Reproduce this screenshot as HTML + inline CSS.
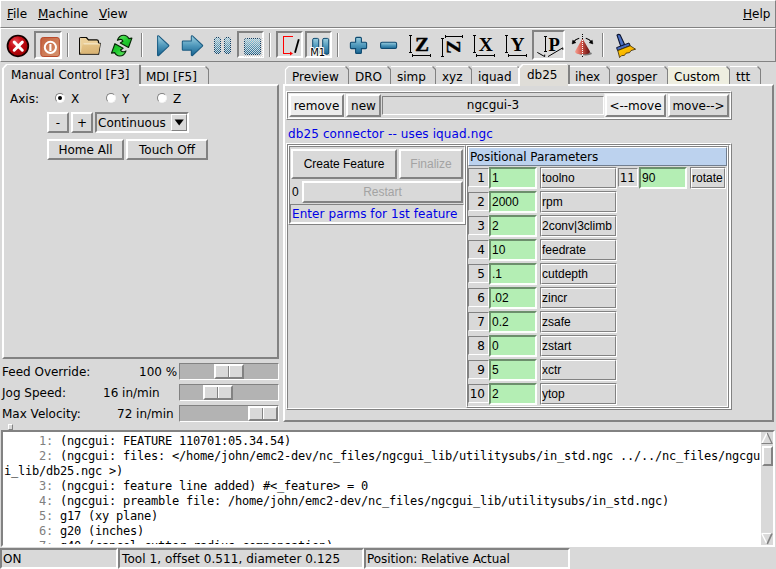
<!DOCTYPE html>
<html><head><meta charset="utf-8"><title>AXIS</title>
<style>
*{box-sizing:border-box;margin:0;padding:0}
html{background:#d9d9d9}
html,body{width:776px;height:569px;overflow:hidden}
body{position:relative;font:12px "DejaVu Sans","Liberation Sans",sans-serif;color:#000}
.a{position:absolute;white-space:nowrap}
.t{position:absolute;white-space:nowrap;line-height:15px;height:15px}
.h{font-family:"Liberation Sans",sans-serif}
.r2{border:2px solid;border-color:#fff #828282 #828282 #fff;background:#d9d9d9}
.s2{border:2px solid;border-color:#828282 #fff #fff #828282;background:#d9d9d9}
.r1{border:1px solid;border-color:#fff #828282 #828282 #fff;background:#d9d9d9}
.s1{border:1px solid;border-color:#828282 #fff #fff #828282;background:#d9d9d9}
.rg{border:1px solid;border-color:#fff #828282 #828282 #fff}
.rg:before{content:"";position:absolute;left:0;top:0;right:0;bottom:0;border:1px solid;border-color:#828282 #fff #fff #828282}
.gv{border:1px solid;border-color:#828282 #fff #fff #828282}
.gv:before{content:"";position:absolute;left:0;top:0;right:0;bottom:0;border:1px solid;border-color:#fff #828282 #828282 #fff}
.btn{text-align:center;line-height:17px;padding-top:1px}
.dis{color:#a3a3a3}
.blue{color:#0000e6}
.g{background:#b4eeb4;border:2px solid;border-color:#6c8f6c #fcfffc #fcfffc #6c8f6c}
.m{font-family:"DejaVu Sans Mono","Liberation Mono",monospace;font-size:12px;letter-spacing:-0.225px;white-space:pre;position:absolute;left:5px;height:15px;line-height:15px}
.m i{font-style:normal;color:#808080}
.sep{position:absolute;top:33px;width:2px;height:24px;border-left:1px solid #828282;border-right:1px solid #fff}
.rad{position:absolute;width:10px;height:10px;border-radius:50%;background:#fff;border:1px solid;border-color:#828282 #f4f4f4 #f4f4f4 #828282;transform:rotate(0deg)}
.tab{position:absolute;top:67px;height:17px;border:1px solid;border-color:#fff #828282 transparent #fff;border-bottom:0;border-radius:3px 4px 0 0}
u{text-decoration:underline;text-underline-offset:1px}
svg{position:absolute;overflow:visible}
</style></head><body>
<div class="t" style="left:7px;top:7px"><u>F</u>ile</div>
<div class="t" style="left:38px;top:7px"><u>M</u>achine</div>
<div class="t" style="left:99px;top:7px"><u>V</u>iew</div>
<div class="t" style="left:743px;top:7px"><u>H</u>elp</div>
<div class="a r1" style="left:0;top:0;width:776px;height:28px;background:none"></div>
<div class="a r1" style="left:0;top:28px;width:776px;height:34px;background:none"></div>
<!-- toolbar -->
<div class="sep" style="left:67px"></div>
<div class="sep" style="left:141px"></div>
<div class="sep" style="left:269px"></div>
<div class="sep" style="left:337px"></div>
<div class="sep" style="left:602px"></div>
<div class="a s2" style="left:34px;top:31px;width:28px;height:28px;background:#dfdfdf"></div>
<div class="a s2" style="left:237px;top:31px;width:27px;height:27px"></div>
<div class="a s2" style="left:276px;top:31px;width:27px;height:27px;background:#dcdcdc"></div>
<div class="a s2" style="left:305px;top:31px;width:27px;height:27px;background:#dcdcdc"></div>
<div class="a s2" style="left:532px;top:30px;width:33px;height:30px;background:#dbdbdb"></div>
<svg style="left:0;top:28px" width="776" height="34" viewBox="0 28 776 34">
<defs>
<radialGradient id="gE" cx="0.38" cy="0.3" r="0.75"><stop offset="0" stop-color="#e85058"/><stop offset="0.4" stop-color="#c80c16"/><stop offset="1" stop-color="#980000"/></radialGradient>
<linearGradient id="gP" x1="0" y1="0" x2="1" y2="1"><stop offset="0" stop-color="#c4603c"/><stop offset="1" stop-color="#d6946f"/></linearGradient>
<linearGradient id="gB" x1="0" y1="0" x2="0" y2="1"><stop offset="0" stop-color="#9ccfe0"/><stop offset="0.5" stop-color="#4f98bb"/><stop offset="1" stop-color="#1a6693"/></linearGradient>
<linearGradient id="gF" x1="0" y1="0" x2="0.3" y2="1"><stop offset="0" stop-color="#e6c68a"/><stop offset="1" stop-color="#dab474"/></linearGradient>
<linearGradient id="gC" x1="0" y1="0" x2="1" y2="0"><stop offset="0" stop-color="#f4a294"/><stop offset="0.42" stop-color="#d4584c"/><stop offset="1" stop-color="#5e0c0c"/></linearGradient>
<linearGradient id="gY" x1="0" y1="0" x2="1" y2="1"><stop offset="0" stop-color="#ffd400"/><stop offset="0.6" stop-color="#f8b000"/><stop offset="1" stop-color="#e88400"/></linearGradient>
<pattern id="st" width="2" height="2" patternUnits="userSpaceOnUse"><rect x="0" y="0" width="1" height="1" fill="#2f7ca6"/><rect x="1" y="1" width="1" height="1" fill="#2f7ca6"/><rect x="1" y="0" width="1" height="1" fill="#cfe6ee"/><rect x="0" y="1" width="1" height="1" fill="#cfe6ee"/></pattern>
<linearGradient id="gG" x1="0" y1="0" x2="1" y2="1"><stop offset="0" stop-color="#6eea6e"/><stop offset="0.5" stop-color="#22cc30"/><stop offset="1" stop-color="#10b020"/></linearGradient>
<pattern id="ck" width="2" height="2" patternUnits="userSpaceOnUse"><rect x="0" y="0" width="1" height="1" fill="#d9d9d9"/><rect x="1" y="1" width="1" height="1" fill="#d9d9d9"/></pattern>
</defs>
<!-- estop -->
<circle cx="17.9" cy="45.9" r="10.4" fill="url(#gE)" stroke="#140000" stroke-width="1.7"/>
<path d="M14.2 42.1L22.3 50.2M22.3 42.1L14.2 50.2" stroke="#fff" stroke-width="3" stroke-linecap="round"/>
<!-- power -->
<rect x="40.8" y="37.5" width="18.6" height="19" rx="2.4" fill="url(#gP)" stroke="#b94a2c" stroke-width="1"/>
<circle cx="50.4" cy="47.3" r="5.6" fill="none" stroke="#fff" stroke-width="2"/>
<path d="M50.4 44V51" stroke="#fff" stroke-width="2.1"/>
<!-- folder -->
<path d="M79.6 54.2V38.4Q79.6 37.5 80.6 37.5H86.4L88.4 39.9H96.8Q98.2 39.9 98.4 41.2L98.6 43.4H100.2L98.6 54.2Z" fill="#ecd09a" stroke="#0c0a04" stroke-width="1.2" stroke-linejoin="round"/>
<path d="M84.2 43.7H99.8Q100.4 43.7 100.2 44.6L98.4 53.7H80.4Q80.4 53 81 51L82.4 45.2Q82.8 43.7 84.2 43.7Z" fill="url(#gF)"/>
<path d="M83.6 43.9H99.6" stroke="#fbf3dc" stroke-width="0.9"/>
<path d="M80.6 37.9V52" stroke="#f8e8c0" stroke-width="0.8"/>
<!-- refresh -->
<g id="ra" fill="url(#gG)" stroke="#052805" stroke-width="1.15" stroke-linejoin="round">
<path d="M117.4 40.3C118.4 37.2 121 35.2 123.8 35.2C126 35.2 127.8 36.6 128.8 38.6L131.9 38.1L128.5 47.5L120.3 43L122.9 41.2C122.4 40 121.6 39.4 120.6 39.4C119.4 39.4 118.4 39.8 117.4 40.3Z"/>
<path transform="rotate(180 121.7 45.6)" d="M117.4 40.3C118.4 37.2 121 35.2 123.8 35.2C126 35.2 127.8 36.6 128.8 38.6L131.9 38.1L128.5 47.5L120.3 43L122.9 41.2C122.4 40 121.6 39.4 120.6 39.4C119.4 39.4 118.4 39.8 117.4 40.3Z"/>
</g>
<!-- play -->
<path d="M158.2 36.4V55L168.2 45.7Z" fill="#17587f" stroke="#17587f" stroke-width="2.4" stroke-linejoin="round"/>
<path d="M158.2 36.4V55L168.2 45.7Z" fill="url(#gB)" stroke="url(#gB)" stroke-width="0.5" stroke-linejoin="round"/>
<!-- step -->
<path d="M183 41.8H192V36.4L202 45.7L192 55V49.6H183Z" fill="#17587f" stroke="#17587f" stroke-width="2.4" stroke-linejoin="round"/>
<path d="M183 41.8H192V36.4L202 45.7L192 55V49.6H183Z" fill="url(#gB)" stroke="url(#gB)" stroke-width="0.5" stroke-linejoin="round"/>
<!-- pause (disabled) -->
<rect x="214.5" y="37.5" width="6" height="16" rx="1.5" fill="url(#gB)" stroke="#0d3f66" stroke-width="1"/>
<rect x="224.5" y="37.5" width="6" height="16" rx="1.5" fill="url(#gB)" stroke="#0d3f66" stroke-width="1"/>
<rect x="213" y="36" width="20" height="20" fill="url(#ck)"/>
<!-- stop (disabled) -->
<rect x="244.5" y="38.5" width="16" height="16" rx="2" fill="url(#gB)" stroke="#0d3f66" stroke-width="1"/>
<rect x="243" y="37" width="20" height="20" fill="url(#ck)"/>
<!-- block delete -->
<path d="M293 36.5H283.5V53.5H290" fill="none" stroke="#f00" stroke-width="1" shape-rendering="crispEdges"/>
<path d="M290 51.6L293 53.6L290 55.6Z" fill="#f00"/>
<path d="M298.8 39.2L295 52.8" stroke="#000" stroke-width="1.8"/>
<!-- optional stop -->
<rect x="312.7" y="38.4" width="6" height="15.8" rx="1.3" fill="url(#gB)" stroke="#0f4a70" stroke-width="1"/>
<rect x="322.7" y="38.4" width="6" height="15.8" rx="1.3" fill="url(#gB)" stroke="#0f4a70" stroke-width="1"/>
<text x="310.2" y="55.8" font-family="DejaVu Sans,sans-serif" font-size="10" stroke="#fff" stroke-width="2.2" stroke-linejoin="round">M1</text>
<text x="310.2" y="55.8" font-family="DejaVu Sans,sans-serif" font-size="10" fill="#000">M1</text>
<!-- plus -->
<path d="M356.6 37.4H360.4Q361.4 37.4 361.4 38.4V42.2H365.6Q366.6 42.2 366.6 43.2V47.6Q366.6 48.6 365.6 48.6H361.4V52.4Q361.4 53.4 360.4 53.4H356.6Q355.6 53.4 355.6 52.4V48.6H351.4Q350.4 48.6 350.4 47.6V43.2Q350.4 42.2 351.4 42.2H355.6V38.4Q355.6 37.4 356.6 37.4Z" fill="url(#gB)" stroke="#0f4a70" stroke-width="1.1"/>
<!-- minus -->
<rect x="380.6" y="42.3" width="16" height="6.2" rx="1.4" fill="url(#gB)" stroke="#0f4a70" stroke-width="1.1"/>
<!-- view icons -->
<g stroke="#000" stroke-width="1" fill="none" shape-rendering="crispEdges">
<path d="M410.5 35V53M409 35.5H412M409 52.5H412"/><path d="M412 55.5H431M412.5 54V57M430.5 54V57"/>
<path d="M442.5 38V57M441 38.5H444M441 56.5H444"/><path d="M445 36.5H463M445.5 35V38M462.5 35V38"/>
<path d="M474.5 35V53M473 35.5H476M473 52.5H476"/><path d="M476 55.5H495M476.5 54V57M494.5 54V57"/>
<path d="M506.5 35V53M505 35.5H508M505 52.5H508"/><path d="M508 55.5H527M508.5 54V57M526.5 54V57"/>
<path d="M545.5 36V52M544 36.5H547M544 51.5H547"/>
</g>
<g font-family="Liberation Serif,serif" font-weight="bold" font-size="19.5" fill="#000">
<text transform="translate(414.9 51) scale(1.08 1)" font-size="19.5" stroke="#000" stroke-width="0.4">Z</text>
<text x="478.7" y="51">X</text>
<text x="510.5" y="51">Y</text>
<text x="548.6" y="51.2" font-size="18.5">P</text>
</g>
<text transform="matrix(0 1 -1 0 447.2 40.4)" font-family="Liberation Serif,serif" font-weight="bold" font-size="19.5" fill="#000" stroke="#000" stroke-width="0.4">Z</text>
<g stroke="#000" stroke-width="1" fill="none">
<path d="M537.3 52.4L544.7 56.6M544.7 56.6V54.6M548 56.6L562.8 47.8M562.8 47.8V49.8"/>
</g>
<!-- cone -->
<ellipse cx="585.5" cy="53.6" rx="6.4" ry="1.8" fill="#000" opacity="0.45"/>
<path d="M582.5 38.6L575 51.4Q575 54.3 582.5 54.3Q590 54.3 590 51.4Z" fill="url(#gC)"/>
<path d="M582.5 34V58" stroke="#000" stroke-width="1" stroke-dasharray="1 1"/>
<path d="M582.5 39V55" stroke="#fff" stroke-width="1" stroke-dasharray="1 1" stroke-dashoffset="1"/>
<path d="M573.2 42.4Q575.6 38.9 579.2 38.2M591.8 42.4Q589.4 38.9 585.8 38.2" fill="none" stroke="#000" stroke-width="1.1"/>
<path d="M572.2 43.9L572.8 40.2L575.9 42.6Z M592.8 43.9L592.2 40.2L589.1 42.6Z" fill="#000" stroke="#000" stroke-width="0.6" stroke-linejoin="round"/>
<!-- broom -->
<path d="M617 35.2Q618.6 33.6 620.2 35L624.6 44.6L620.8 46.4Z" fill="#4a70c4" stroke="#0c1430" stroke-width="1.1"/>
<path d="M616.6 47.6L629 43L630.2 45.6L617.6 50.6Z" fill="#4a6cc0" stroke="#0c1430" stroke-width="1"/>
<path d="M617.8 50.6L630.2 45.8L635.6 49.2L631 50.6L629.6 52.6L626 53.2L624.4 55.4L621.6 55.6L619.6 57.6Z" fill="url(#gY)" stroke="#3a2800" stroke-width="0.8"/>
</svg>
<div class="a r2" style="left:2px;top:84px;width:277px;height:275px"></div>
<svg style="left:0;top:60px" width="290" height="30" fill="none">
<path d="M4 26V8L7 5H139V26Z" fill="#d9d9d9"/>
<path d="M3 26V8" stroke="#fff" stroke-width="2" shape-rendering="crispEdges"/>
<path d="M6 4.5H139" stroke="#fff" stroke-width="1" shape-rendering="crispEdges"/>
<path d="M3 8.5L6.5 4.7" stroke="#fff" stroke-width="1.7"/>
<path d="M140 5V24" stroke="#828282" stroke-width="2" shape-rendering="crispEdges"/>
<path d="M141 6.5H205.5" stroke="#fff" stroke-width="1" shape-rendering="crispEdges"/>
<path d="M205.5 6.5L208.5 9.5" stroke="#828282" stroke-width="1.2"/>
<path d="M208.5 9V24" stroke="#828282" stroke-width="1" shape-rendering="crispEdges"/>
</svg>
<div class="t" style="left:11px;top:68px">Manual Control [F3]</div>
<div class="t" style="left:146px;top:70px">MDI [F5]</div>
<div class="t" style="left:10px;top:92px">Axis:</div>
<div class="rad" style="left:55px;top:93px"></div><div class="a" style="left:58px;top:96px;width:4px;height:4px;border-radius:50%;background:#000"></div>
<div class="rad" style="left:106px;top:93px"></div>
<div class="rad" style="left:157px;top:93px"></div>
<div class="t" style="left:71px;top:92px">X</div>
<div class="t" style="left:122px;top:92px">Y</div>
<div class="t" style="left:173px;top:92px">Z</div>
<div class="a r2 btn" style="left:47px;top:112px;width:22px;height:21px">-</div>
<div class="a r2 btn" style="left:71px;top:112px;width:22px;height:21px">+</div>
<div class="a s2" style="left:95px;top:112px;width:94px;height:21px"></div>
<div class="t" style="left:98px;top:116px">Continuous</div>
<div class="a r1" style="left:171px;top:114px;width:16px;height:17px"></div>
<svg style="left:171px;top:114px" width="16" height="17"><path d="M3.6 5.6h9.2l-4.6 5.8z" fill="#000"/></svg>
<div class="a r2 btn" style="left:47px;top:139px;width:77px;height:21px">Home All</div>
<div class="a r2 btn" style="left:126px;top:139px;width:82px;height:21px">Touch Off</div>
<div class="t" style="left:2px;top:365px">Feed Override:</div>
<div class="t" style="left:139px;top:365px">100 %</div>
<div class="t" style="left:2px;top:386px">Jog Speed:</div>
<div class="t" style="left:103px;top:386px">16 in/min</div>
<div class="t" style="left:2px;top:407px">Max Velocity:</div>
<div class="t" style="left:117px;top:407px">72 in/min</div>
<div class="a s1" style="left:179px;top:363px;width:100px;height:17px;background:#b3b3b3"></div><div class="a r2" style="left:214px;top:364px;width:30px;height:15px"></div><div class="a" style="left:228px;top:366px;width:2px;height:11px;border-left:1px solid #828282;border-right:1px solid #fff"></div>
<div class="a s1" style="left:179px;top:384px;width:100px;height:17px;background:#b3b3b3"></div><div class="a r2" style="left:203px;top:385px;width:30px;height:15px"></div><div class="a" style="left:217px;top:387px;width:2px;height:11px;border-left:1px solid #828282;border-right:1px solid #fff"></div>
<div class="a s1" style="left:179px;top:405px;width:100px;height:17px;background:#b3b3b3"></div><div class="a r2" style="left:248px;top:406px;width:30px;height:15px"></div><div class="a" style="left:262px;top:408px;width:2px;height:11px;border-left:1px solid #828282;border-right:1px solid #fff"></div>
<div class="a r1" style="left:8px;top:424px;width:5px;height:6px"></div>
<div class="a r2" style="left:283px;top:84px;width:491px;height:338px"></div>
<svg style="left:0;top:60px" width="776" height="30" fill="none">
<path d="M285.5 24V9.5L288.5 6.5" stroke="#fff" stroke-width="1.2"/><path d="M288 6.5H346" stroke="#fff" stroke-width="1" shape-rendering="crispEdges"/><path d="M345.5 6.5L348.5 9.5" stroke="#828282" stroke-width="1.2"/><path d="M348.5 9V24" stroke="#828282" stroke-width="1" shape-rendering="crispEdges"/>
<path d="M349 6.5H388" stroke="#fff" stroke-width="1" shape-rendering="crispEdges"/><path d="M387.5 6.5L390.5 9.5" stroke="#828282" stroke-width="1.2"/><path d="M390.5 9V24" stroke="#828282" stroke-width="1" shape-rendering="crispEdges"/>
<path d="M391 6.5H433" stroke="#fff" stroke-width="1" shape-rendering="crispEdges"/><path d="M432.5 6.5L435.5 9.5" stroke="#828282" stroke-width="1.2"/><path d="M435.5 9V24" stroke="#828282" stroke-width="1" shape-rendering="crispEdges"/>
<path d="M436 6.5H469" stroke="#fff" stroke-width="1" shape-rendering="crispEdges"/><path d="M468.5 6.5L471.5 9.5" stroke="#828282" stroke-width="1.2"/><path d="M471.5 9V24" stroke="#828282" stroke-width="1" shape-rendering="crispEdges"/>
<path d="M472 6.5H518" stroke="#fff" stroke-width="1" shape-rendering="crispEdges"/><path d="M517.5 6.5L520.5 9.5" stroke="#828282" stroke-width="1.2"/><path d="M520.5 9V24" stroke="#828282" stroke-width="1" shape-rendering="crispEdges"/>
<path d="M569 6.5H607" stroke="#fff" stroke-width="1" shape-rendering="crispEdges"/><path d="M606.5 6.5L609.5 9.5" stroke="#828282" stroke-width="1.2"/><path d="M609.5 9V24" stroke="#828282" stroke-width="1" shape-rendering="crispEdges"/>
<path d="M610 6.5H665" stroke="#fff" stroke-width="1" shape-rendering="crispEdges"/><path d="M664.5 6.5L667.5 9.5" stroke="#828282" stroke-width="1.2"/><path d="M667.5 9V24" stroke="#828282" stroke-width="1" shape-rendering="crispEdges"/>
<path d="M668 24V7H726L729 10V24Z" fill="#eeeee0"/><path d="M668 6.5H727" stroke="#fff" stroke-width="1" shape-rendering="crispEdges"/><path d="M726.5 6.5L729.5 9.5" stroke="#828282" stroke-width="1.2"/><path d="M729.5 9V24" stroke="#828282" stroke-width="1" shape-rendering="crispEdges"/>
<path d="M730 6.5H758" stroke="#fff" stroke-width="1" shape-rendering="crispEdges"/><path d="M757.5 6.5L760.5 9.5" stroke="#828282" stroke-width="1.2"/><path d="M760.5 9V24" stroke="#828282" stroke-width="1" shape-rendering="crispEdges"/>
<path d="M520 26V8L523 5H568V26Z" fill="#dfddd8"/><path d="M519 26V8" stroke="#fff" stroke-width="2" shape-rendering="crispEdges"/><path d="M522 4.5H567" stroke="#fff" stroke-width="1" shape-rendering="crispEdges"/><path d="M519 8.5L522.5 4.7" stroke="#fff" stroke-width="1.7"/><path d="M569 5V24" stroke="#828282" stroke-width="2" shape-rendering="crispEdges"/></svg>
<div class="t" style="left:292px;top:70px">Preview</div>
<div class="t" style="left:355px;top:70px">DRO</div>
<div class="t" style="left:397px;top:70px">simp</div>
<div class="t" style="left:442px;top:70px">xyz</div>
<div class="t" style="left:478px;top:70px">iquad</div>
<div class="t" style="left:575px;top:70px">ihex</div>
<div class="t" style="left:616px;top:70px">gosper</div>
<div class="t" style="left:674px;top:70px">Custom</div>
<div class="t" style="left:736px;top:70px">ttt</div>
<div class="t" style="left:527px;top:68px">db25</div>
<div class="a rg" style="left:286px;top:91px;width:446px;height:29px"></div>
<div class="a" style="left:288px;top:93px;width:57px;height:25px;background:#ececec"></div>
<div class="a r2 btn" style="left:289px;top:94px;width:55px;height:23px;background:#ececec;line-height:19px">remove</div>
<div class="a r2 btn" style="left:346px;top:94px;width:35px;height:23px;line-height:19px">new</div>
<div class="a s1 btn" style="left:382px;top:96px;width:222px;height:19px;line-height:17px;padding-top:0">ngcgui-3</div>
<div class="a" style="left:604px;top:93px;width:63px;height:25px;background:#ececec"></div>
<div class="a r2 btn" style="left:605px;top:94px;width:61px;height:23px;background:#ececec;line-height:19px">&lt;--move</div>
<div class="a r2 btn" style="left:668px;top:94px;width:61px;height:23px;line-height:19px">move--&gt;</div>
<div class="t blue" style="left:288px;top:127px;letter-spacing:.115px">db25 connector -- uses iquad.ngc</div>
<div class="a rg" style="left:286px;top:143px;width:446px;height:267px"></div>
<div class="a rg" style="left:288px;top:145px;width:178px;height:80px"></div>
<div class="a r2 btn h" style="left:291px;top:149px;width:106px;height:30px;line-height:26px;padding-top:0">Create Feature</div>
<div class="a r2 btn h dis" style="left:399px;top:149px;width:64px;height:30px;line-height:26px;padding-top:0">Finalize</div>
<div class="t h" style="left:292px;top:185px">0</div>
<div class="a r2 btn h dis" style="left:302px;top:181px;width:161px;height:22px;line-height:18px;padding-top:0">Restart</div>
<div class="a s1" style="left:290px;top:204px;width:174px;height:19px"></div>
<div class="t blue" style="left:292px;top:207px;letter-spacing:.075px">Enter parms for 1st feature</div>
<div class="a rg" style="left:466px;top:145px;width:263px;height:263px"></div>
<div class="a" style="left:729px;top:145px;width:1px;height:263px;background:#fff"></div>
<div class="a" style="left:468px;top:147px;width:259px;height:19px;background:#bcd2ee;border:1px solid;border-color:#fff #717e8f #717e8f #fff"></div>
<div class="t" style="left:470px;top:150px;letter-spacing:-.085px">Positional Parameters</div>
<div class="a s1" style="left:468px;top:168px;width:21px;height:19px;text-align:right;line-height:19px;padding-right:3px">1</div><div class="a g h" style="left:489px;top:167px;width:48px;height:22px;line-height:19px;padding-left:1px">1</div><div class="a gv h" style="left:540px;top:167px;width:77px;height:22px;line-height:20px;padding-left:1px">toolno</div>
<div class="a s1" style="left:468px;top:192px;width:21px;height:19px;text-align:right;line-height:19px;padding-right:3px">2</div><div class="a g h" style="left:489px;top:191px;width:48px;height:22px;line-height:19px;padding-left:1px">2000</div><div class="a gv h" style="left:540px;top:191px;width:77px;height:22px;line-height:20px;padding-left:1px">rpm</div>
<div class="a s1" style="left:468px;top:216px;width:21px;height:19px;text-align:right;line-height:19px;padding-right:3px">3</div><div class="a g h" style="left:489px;top:215px;width:48px;height:22px;line-height:19px;padding-left:1px">2</div><div class="a gv h" style="left:540px;top:215px;width:77px;height:22px;line-height:20px;padding-left:1px">2conv|3climb</div>
<div class="a s1" style="left:468px;top:240px;width:21px;height:19px;text-align:right;line-height:19px;padding-right:3px">4</div><div class="a g h" style="left:489px;top:239px;width:48px;height:22px;line-height:19px;padding-left:1px">10</div><div class="a gv h" style="left:540px;top:239px;width:77px;height:22px;line-height:20px;padding-left:1px">feedrate</div>
<div class="a s1" style="left:468px;top:264px;width:21px;height:19px;text-align:right;line-height:19px;padding-right:3px">5</div><div class="a g h" style="left:489px;top:263px;width:48px;height:22px;line-height:19px;padding-left:1px">.1</div><div class="a gv h" style="left:540px;top:263px;width:77px;height:22px;line-height:20px;padding-left:1px">cutdepth</div>
<div class="a s1" style="left:468px;top:288px;width:21px;height:19px;text-align:right;line-height:19px;padding-right:3px">6</div><div class="a g h" style="left:489px;top:287px;width:48px;height:22px;line-height:19px;padding-left:1px">.02</div><div class="a gv h" style="left:540px;top:287px;width:77px;height:22px;line-height:20px;padding-left:1px">zincr</div>
<div class="a s1" style="left:468px;top:312px;width:21px;height:19px;text-align:right;line-height:19px;padding-right:3px">7</div><div class="a g h" style="left:489px;top:311px;width:48px;height:22px;line-height:19px;padding-left:1px">0.2</div><div class="a gv h" style="left:540px;top:311px;width:77px;height:22px;line-height:20px;padding-left:1px">zsafe</div>
<div class="a s1" style="left:468px;top:336px;width:21px;height:19px;text-align:right;line-height:19px;padding-right:3px">8</div><div class="a g h" style="left:489px;top:335px;width:48px;height:22px;line-height:19px;padding-left:1px">0</div><div class="a gv h" style="left:540px;top:335px;width:77px;height:22px;line-height:20px;padding-left:1px">zstart</div>
<div class="a s1" style="left:468px;top:360px;width:21px;height:19px;text-align:right;line-height:19px;padding-right:3px">9</div><div class="a g h" style="left:489px;top:359px;width:48px;height:22px;line-height:19px;padding-left:1px">5</div><div class="a gv h" style="left:540px;top:359px;width:77px;height:22px;line-height:20px;padding-left:1px">xctr</div>
<div class="a s1" style="left:468px;top:384px;width:21px;height:19px;text-align:right;line-height:19px;padding-right:3px">10</div><div class="a g h" style="left:489px;top:383px;width:48px;height:22px;line-height:19px;padding-left:1px">2</div><div class="a gv h" style="left:540px;top:383px;width:77px;height:22px;line-height:20px;padding-left:1px">ytop</div>
<div class="a s1" style="left:618px;top:168px;width:20px;height:19px;text-align:right;line-height:19px;padding-right:2px">11</div>
<div class="a g h" style="left:639px;top:167px;width:48px;height:22px;line-height:19px;padding-left:1px">90</div>
<div class="a gv h" style="left:690px;top:167px;width:36px;height:22px;line-height:20px;padding-left:1px">rotate</div>
<div class="a s2" style="left:1px;top:430px;width:774px;height:117px;background:#fff;overflow:hidden">
<div class="a" style="left:758px;top:0;width:12px;height:113px;background:#d9d9d9"></div>
<svg style="left:758px;top:0" width="12" height="113">
<path d="M6 1L1 11.5H11Z" fill="#d9d9d9"/><path d="M6 1L1 11" stroke="#fff" stroke-width="1.6" fill="none"/><path d="M6.2 1L11 11.5H0.5" stroke="#828282" stroke-width="1.2" fill="none"/>
<path d="M6 112L1 101.5H11Z" fill="#d9d9d9"/><path d="M0.5 101.5H11" stroke="#fff" stroke-width="1.2" fill="none"/><path d="M6 112L1 102" stroke="#fff" stroke-width="1.4" fill="none"/><path d="M6.2 112L11 101.5" stroke="#828282" stroke-width="1.8" fill="none"/>
</svg>
<div class="a r2" style="left:759px;top:14px;width:11px;height:20px"></div>
<div class="a" style="left:0;top:0;width:758px;height:112px;overflow:hidden"><div class="m" style="left:1px;top:2px"><i>     1:</i> (ngcgui: FEATURE 110701:05.34.54)</div><div class="m" style="left:1px;top:17px"><i>     2:</i> (ngcgui: files: &lt;/home/john/emc2-dev/nc_files/ngcgui_lib/utilitysubs/in_std.ngc ../../nc_files/ngcgu</div><div class="m" style="left:1px;top:32px">i_lib/db25.ngc &gt;)</div><div class="m" style="left:1px;top:47px"><i>     3:</i> (ngcgui: feature line added) #&lt;_feature&gt; = 0</div><div class="m" style="left:1px;top:62px"><i>     4:</i> (ngcgui: preamble file: /home/john/emc2-dev/nc_files/ngcgui_lib/utilitysubs/in_std.ngc)</div><div class="m" style="left:1px;top:77px"><i>     5:</i> g17 (xy plane)</div><div class="m" style="left:1px;top:92px"><i>     6:</i> g20 (inches)</div><div class="m" style="left:1px;top:107px"><i>     7:</i> g40 (cancel cutter radius compensation)</div></div></div>
<div class="a s2" style="left:0;top:548px;width:118px;height:21px"></div><div class="t" style="left:3px;top:552px">ON</div>
<div class="a s2" style="left:118px;top:548px;width:246px;height:21px"></div><div class="t" style="left:122px;top:552px;letter-spacing:.09px">Tool 1, offset 0.511, diameter 0.125</div>
<div class="a s2" style="left:364px;top:548px;width:206px;height:21px"></div><div class="t" style="left:367px;top:552px;letter-spacing:-.06px">Position: Relative Actual</div>
</body></html>
